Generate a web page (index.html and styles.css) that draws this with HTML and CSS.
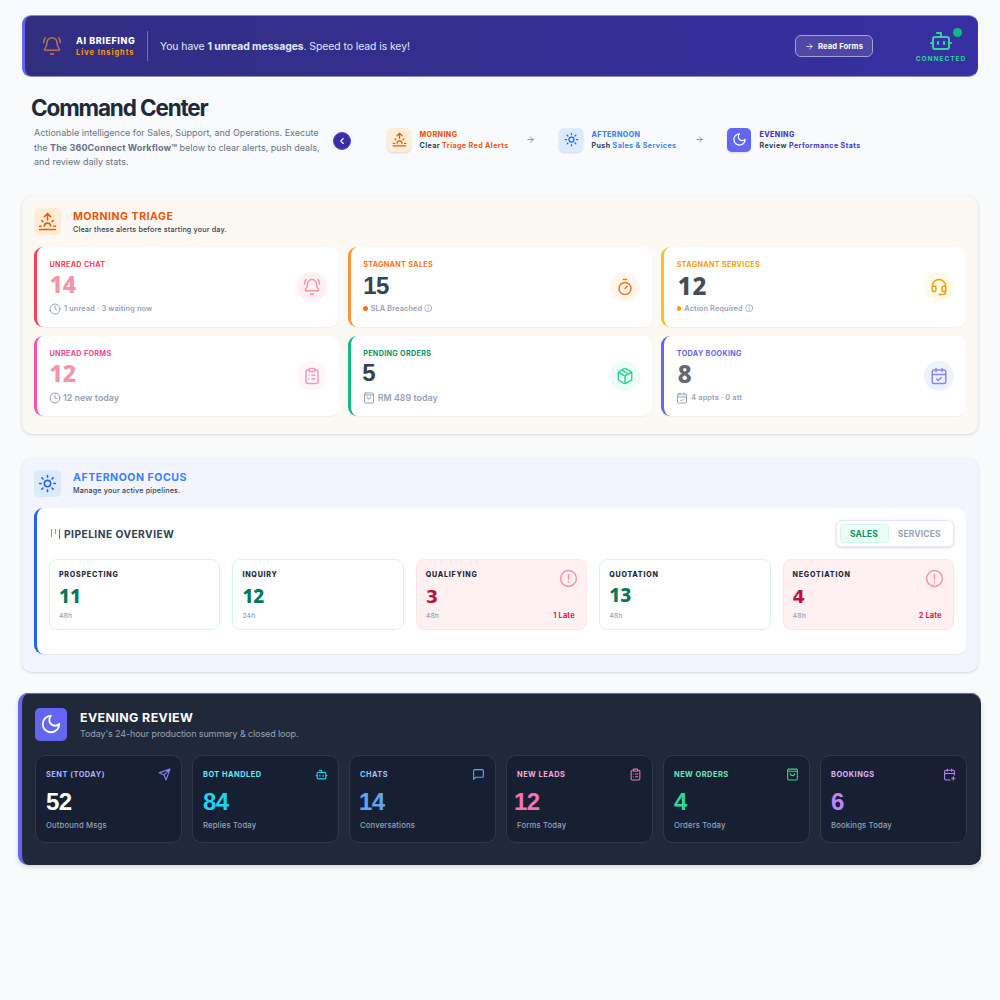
FILE: index.html
```
<!DOCTYPE html>
<html lang="en">
  <head>
    <meta charset="utf-8">
    <title>Command Center</title>
    <link rel="stylesheet" href="styles.css">
  </head>
  <body>

    <svg class="sprite" xmlns="http://www.w3.org/2000/svg">
      <symbol id="bell" viewBox="0 0 24 24"><path d="M10.27 21a2 2 0 0 0 3.46 0M22 8c0-2.3-.8-4.3-2-6M3.26 15.33A1 1 0 0 0 4 17h16a1 1 0 0 0 .74-1.67C19.41 13.96 18 12.5 18 8A6 6 0 0 0 6 8c0 4.5-1.41 5.96-2.74 7.33M4 2C2.8 3.7 2 5.7 2 8" /></symbol>
      <symbol id="arrow" viewBox="0 0 24 24"><path d="M5 12h14M12 5l7 7-7 7" /></symbol>
      <symbol id="chevron" viewBox="0 0 24 24"><path d="M15 18l-6-6 6-6" /></symbol>
      <symbol id="bot" viewBox="0 0 24 24"><path d="M12 8V4H8M2 14h2M20 14h2M15 13v2M9 13v2" /><rect x="4" y="8" width="16" height="12" rx="2" /></symbol>
      <symbol id="sunrise" viewBox="0 0 24 24"><path d="M12 2v8M4.93 10.93l1.41 1.41M2 18h2M20 18h2M19.07 10.93l-1.41 1.41M22 22H2M8 6l4-4 4 4M16 18a4 4 0 0 0-8 0" /></symbol>
      <symbol id="sun" viewBox="0 0 24 24"><circle cx="12" cy="12" r="4" /><path d="M12 2v2M12 20v2M4.93 4.93l1.41 1.41M17.66 17.66l1.41 1.41M2 12h2M20 12h2M6.34 17.66l-1.41 1.41M19.07 4.93l-1.41 1.41" /></symbol>
      <symbol id="moon" viewBox="0 0 24 24"><path d="M12 3a6 6 0 0 0 9 9 9 9 0 1 1-9-9Z" /></symbol>
      <symbol id="clock" viewBox="0 0 24 24"><circle cx="12" cy="12" r="10" /><path d="M12 6v6l4 2" /></symbol>
      <symbol id="timer" viewBox="0 0 24 24"><path d="M10 2h4M12 14l3-3" /><circle cx="12" cy="14" r="8" /></symbol>
      <symbol id="headset" viewBox="0 0 24 24"><path d="M3 11h3a2 2 0 0 1 2 2v3a2 2 0 0 1-2 2H5a2 2 0 0 1-2-2v-5Zm0 0a9 9 0 1 1 18 0m0 0v5a2 2 0 0 1-2 2h-1a2 2 0 0 1-2-2v-3a2 2 0 0 1 2-2h3ZM21 16v2a4 4 0 0 1-4 4h-5" /></symbol>
      <symbol id="clipboard" viewBox="0 0 24 24"><rect x="8" y="2" width="8" height="4" rx="1" /><path d="M16 4h2a2 2 0 0 1 2 2v14a2 2 0 0 1-2 2H6a2 2 0 0 1-2-2V6a2 2 0 0 1 2-2h2M12 11h4M12 16h4M8 11h.01M8 16h.01" /></symbol>
      <symbol id="package" viewBox="0 0 24 24"><path d="M11 21.73a2 2 0 0 0 2 0l7-4A2 2 0 0 0 21 16V8a2 2 0 0 0-1-1.73l-7-4a2 2 0 0 0-2 0l-7 4A2 2 0 0 0 3 8v8a2 2 0 0 0 1 1.73zM12 22V12M3.3 7L12 12l8.7-5M7.5 4.27l9 5.15" /></symbol>
      <symbol id="calendar" viewBox="0 0 24 24"><path d="M8 2v4M16 2v4M3 10h18M9 16l2 2 4-4" /><rect x="3" y="4" width="18" height="18" rx="2" /></symbol>
      <symbol id="calendar-plus" viewBox="0 0 24 24"><path d="M8 2v4M16 2v4M3 10h18M21 13V6a2 2 0 0 0-2-2H5a2 2 0 0 0-2 2v14a2 2 0 0 0 2 2h8M16 19h6M19 16v6" /></symbol>
      <symbol id="bag" viewBox="0 0 24 24"><rect x="3" y="2" width="18" height="20" rx="2" /><path d="M3 6h18M16 10a4 4 0 0 1-8 0" /></symbol>
      <symbol id="info" viewBox="0 0 24 24"><circle cx="12" cy="12" r="10" /><path d="M12 6v.5M12 10v8" /></symbol>
      <symbol id="alert" viewBox="0 0 24 24"><circle cx="12" cy="12" r="10" /><path d="M12 7v6M12 16.5v.5" /></symbol>
      <symbol id="send" viewBox="0 0 24 24"><path d="M22 2l-7 20-4-9-9-4ZM22 2L11 13" /></symbol>
      <symbol id="message" viewBox="0 0 24 24"><path d="M21 15a2 2 0 0 1-2 2H7l-4 4V5a2 2 0 0 1 2-2h14a2 2 0 0 1 2 2z" /></symbol>
    </svg>

    <header class="briefing">
      <svg class="icon briefing-bell"><use href="#bell" /></svg>
      <div class="briefing-title">
        <strong>AI BRIEFING</strong>
        <span>Live Insights</span>
      </div>
      <p class="briefing-text">You have <b>1 unread messages</b>. Speed to lead is key!</p>
      <button class="read-forms"><svg class="icon"><use href="#arrow" /></svg>Read Forms</button>
      <div class="status">
        <svg class="icon"><use href="#bot" /></svg>
        <span class="status-dot"></span>
        <span class="status-text">CONNECTED</span>
      </div>
    </header>

    <section class="intro">
      <div class="intro-text">
        <h1>Command Center</h1>
        <p>Actionable intelligence for Sales, Support, and Operations. Execute<br>the <b>The 360Connect Workflow™</b> below to clear alerts, push deals,<br>and review daily stats.</p>
      </div>
      <button class="collapse"><svg class="icon"><use href="#chevron" /></svg></button>
      <div class="steps">
        <div class="step step-morning">
          <span class="tile"><svg class="icon"><use href="#sunrise" /></svg></span>
          <div><strong>MORNING</strong><p>Clear <em>Triage Red Alerts</em></p></div>
        </div>
        <svg class="icon step-arrow"><use href="#arrow" /></svg>
        <div class="step step-afternoon">
          <span class="tile"><svg class="icon"><use href="#sun" /></svg></span>
          <div><strong>AFTERNOON</strong><p>Push <em>Sales &amp; Services</em></p></div>
        </div>
        <svg class="icon step-arrow"><use href="#arrow" /></svg>
        <div class="step step-evening">
          <span class="tile"><svg class="icon"><use href="#moon" /></svg></span>
          <div><strong>EVENING</strong><p>Review <em>Performance Stats</em></p></div>
        </div>
      </div>
    </section>

    <section class="panel morning">
      <div class="panel-head">
        <span class="tile"><svg class="icon"><use href="#sunrise" /></svg></span>
        <div><h2>MORNING TRIAGE</h2><p>Clear these alerts before starting your day.</p></div>
      </div>
      <div class="alerts">
        <article class="alert chat">
          <div>
            <h3>UNREAD CHAT</h3>
            <div class="count">14</div>
            <p><svg class="icon"><use href="#clock" /></svg>1 unread · 3 waiting now</p>
          </div>
          <span class="badge"><svg class="icon"><use href="#bell" /></svg></span>
        </article>
        <article class="alert sales">
          <div>
            <h3>STAGNANT SALES</h3>
            <div class="count">15</div>
            <p><i class="dot"></i>SLA Breached <svg class="icon info"><use href="#info" /></svg></p>
          </div>
          <span class="badge"><svg class="icon"><use href="#timer" /></svg></span>
        </article>
        <article class="alert services">
          <div>
            <h3>STAGNANT SERVICES</h3>
            <div class="count">12</div>
            <p><i class="dot"></i>Action Required <svg class="icon info"><use href="#info" /></svg></p>
          </div>
          <span class="badge"><svg class="icon"><use href="#headset" /></svg></span>
        </article>
        <article class="alert forms">
          <div>
            <h3>UNREAD FORMS</h3>
            <div class="count">12</div>
            <p><svg class="icon"><use href="#clock" /></svg>12 new today</p>
          </div>
          <span class="badge"><svg class="icon"><use href="#clipboard" /></svg></span>
        </article>
        <article class="alert orders">
          <div>
            <h3>PENDING ORDERS</h3>
            <div class="count">5</div>
            <p><svg class="icon"><use href="#bag" /></svg>RM 489 today</p>
          </div>
          <span class="badge"><svg class="icon"><use href="#package" /></svg></span>
        </article>
        <article class="alert booking">
          <div>
            <h3>TODAY BOOKING</h3>
            <div class="count">8</div>
            <p><svg class="icon"><use href="#calendar" /></svg>4 appts · 0 att</p>
          </div>
          <span class="badge"><svg class="icon"><use href="#calendar" /></svg></span>
        </article>
      </div>
    </section>

    <section class="panel afternoon">
      <div class="panel-head">
        <span class="tile"><svg class="icon"><use href="#sun" /></svg></span>
        <div><h2>AFTERNOON FOCUS</h2><p>Manage your active pipelines.</p></div>
      </div>
      <div class="pipeline">
        <div class="pipeline-head">
          <span class="bars"><i></i><i></i><i></i></span>
          <h3>PIPELINE OVERVIEW</h3>
          <div class="toggle"><button class="active">SALES</button><button>SERVICES</button></div>
        </div>
        <div class="stages">
          <article class="stage">
            <h4>PROSPECTING</h4>
            <div class="count">11</div>
            <footer>48h</footer>
          </article>
          <article class="stage">
            <h4>INQUIRY</h4>
            <div class="count">12</div>
            <footer>24h</footer>
          </article>
          <article class="stage late">
            <h4>QUALIFYING</h4>
            <div class="count">3</div>
            <footer>48h <b>1 Late</b></footer>
            <svg class="icon"><use href="#alert" /></svg>
          </article>
          <article class="stage quotation">
            <h4>QUOTATION</h4>
            <div class="count">13</div>
            <footer>48h</footer>
          </article>
          <article class="stage late">
            <h4>NEGOTIATION</h4>
            <div class="count">4</div>
            <footer>48h <b>2 Late</b></footer>
            <svg class="icon"><use href="#alert" /></svg>
          </article>
        </div>
      </div>
    </section>

    <section class="evening">
      <div class="panel-head">
        <span class="tile"><svg class="icon"><use href="#moon" /></svg></span>
        <div><h2>EVENING REVIEW</h2><p>Today's 24-hour production summary &amp; closed loop.</p></div>
      </div>
      <div class="stats">
        <article class="stat sent">
          <h3>SENT (TODAY)<svg class="icon"><use href="#send" /></svg></h3>
          <div class="count">52</div>
          <p>Outbound Msgs</p>
        </article>
        <article class="stat handled">
          <h3>BOT HANDLED<svg class="icon"><use href="#bot" /></svg></h3>
          <div class="count">84</div>
          <p>Replies Today</p>
        </article>
        <article class="stat chats">
          <h3>CHATS<svg class="icon"><use href="#message" /></svg></h3>
          <div class="count">14</div>
          <p>Conversations</p>
        </article>
        <article class="stat leads">
          <h3>NEW LEADS<svg class="icon"><use href="#clipboard" /></svg></h3>
          <div class="count">12</div>
          <p>Forms Today</p>
        </article>
        <article class="stat new-orders">
          <h3>NEW ORDERS<svg class="icon"><use href="#bag" /></svg></h3>
          <div class="count">4</div>
          <p>Orders Today</p>
        </article>
        <article class="stat bookings">
          <h3>BOOKINGS<svg class="icon"><use href="#calendar-plus" /></svg></h3>
          <div class="count">6</div>
          <p>Bookings Today</p>
        </article>
      </div>
    </section>

  </body>
</html>
```
FILE: styles.css
```
* {
  box-sizing: border-box;
}
html, body {
  height: 100%;
}
body {
  --slate: #1e293b;
  --muted: #64748b;
  --soft: #94a3b8;
  --indigo: #6366f1;

  margin: 0;
  padding: 15px 22px 0;
  background: #f9fafc;
  color: var(--slate);
  font-family: Inter, "Liberation Sans", sans-serif;
  overflow: hidden;
}
h1, h2, h3, h4, p {
  margin: 0;
}
button {
  font-family: inherit;
  padding: 0;
  border: 0;
}
em {
  font-style: normal;
}
.sprite {
  display: none;
}
.icon {
  flex: none;
  fill: none;
  stroke: currentColor;
  stroke-width: 2;
  stroke-linecap: round;
  stroke-linejoin: round;
}

/* top bar */
.briefing {
  display: flex;
  align-items: center;
  height: 62px;
  padding: 0 11px 0 17px;
  border: 1px solid #8f8cc4;
  border-left: 3px solid var(--indigo);
  border-right-color: #3f38a8;
  border-radius: 9px;
  background: linear-gradient(to right, #312e81, #3730a3);
  color: #fff;
}
.briefing-bell {
  width: 20px;
  height: 20px;
  color: #b5714f;
  stroke-width: 1.8;
}
.briefing-title {
  display: flex;
  flex-direction: column;
  width: 72px;
  height: 30px;
  margin-left: 14px;
  padding-top: 4px;
  border-right: 1px solid #6d6cd8;
  line-height: 11.5px;
}
.briefing-title strong {
  font-size: 9px;
  font-weight: 800;
  letter-spacing: 0.57px;
  white-space: nowrap;
}
.briefing-title span {
  font-size: 7.4px;
  font-weight: 700;
  letter-spacing: 1px;
  color: #f59e0b;
  white-space: nowrap;
}
.briefing-text {
  flex: 1;
  margin-left: 12px;
  font-size: 10.4px;
  letter-spacing: -0.06px;
  color: #e0e7ff;
}
.read-forms {
  display: flex;
  align-items: center;
  justify-content: center;
  gap: 4px;
  width: 78px;
  height: 22px;
  border: 1px solid #a5a0d4;
  border-radius: 6px;
  background: #5046a5;
  color: #fff;
  font-size: 7.6px;
  font-weight: 700;
  letter-spacing: 0.15px;
}
.read-forms .icon {
  width: 9px;
  height: 9px;
}
.status {
  position: relative;
  display: flex;
  flex-direction: column;
  align-items: center;
  width: 50px;
  margin-left: 43px;
  color: #34d399;
}
.status .icon {
  width: 24px;
  height: 24px;
}
.status-dot {
  position: absolute;
  top: -1px;
  right: 4px;
  width: 9px;
  height: 9px;
  border-radius: 50%;
  background: #10b981;
}
.status-text {
  margin-top: 2.5px;
  font-size: 6.5px;
  line-height: 8px;
  font-weight: 700;
  letter-spacing: 1px;
}

/* page title and workflow */
.intro {
  display: flex;
  height: 119px;
  padding: 16px 0 0 9px;
}
.intro-text {
  width: 302px;
}
.intro h1 {
  font-size: 22.5px;
  line-height: 30px;
  font-weight: 700;
  letter-spacing: -1.15px;
}
.intro-text p {
  margin: 3px 0 0 3px;
  font-size: 9px;
  line-height: 14.5px;
  color: var(--muted);
  white-space: nowrap;
}
.intro-text b {
  letter-spacing: 0.1px;
}
.collapse {
  display: flex;
  align-items: center;
  justify-content: center;
  width: 18px;
  height: 18px;
  margin-top: 39px;
  border: 1px solid #4f46e5;
  border-radius: 50%;
  background: #3730a3;
  color: #fff;
}
.collapse .icon {
  width: 10px;
  height: 10px;
  stroke-width: 2.6;
}
.steps {
  display: flex;
  align-items: center;
  height: 24px;
  margin: 34.5px 0 0 36px;
}
.step {
  display: flex;
  align-items: center;
  gap: 8.5px;
  font-size: 7.1px;
  line-height: 11px;
  white-space: nowrap;
}
.step strong {
  display: block;
  font-weight: 800;
  letter-spacing: 0.4px;
}
.step p {
  font-weight: 700;
  letter-spacing: 0.4px;
  color: #334155;
}
.step em, .step strong {
  color: var(--accent);
}
.step-morning {
  --accent: #ea580c;
  width: 139px;
}
.step-afternoon {
  --accent: #3b82f6;
  width: 135.5px;
}
.step-evening {
  --accent: #4338ca;
}
.step-arrow {
  width: 9px;
  height: 9px;
  margin-right: 24px;
  color: var(--muted);
}
.step-afternoon + .step-arrow {
  margin-right: 23.5px;
}
.tile {
  display: flex;
  flex: none;
  align-items: center;
  justify-content: center;
  width: 24px;
  height: 24px;
  border-radius: 5px;
  box-shadow: 0 1px 2px rgba(15, 23, 42, 0.15);
}
.tile .icon {
  width: 15px;
  height: 15px;
}
.step-morning .tile, .morning .tile {
  background: #ffedd5;
  color: #ea580c;
}
.step-afternoon .tile, .afternoon .tile {
  background: #dbeafe;
  color: #2563eb;
}
.step-evening .tile, .evening .tile {
  background: var(--indigo);
  color: #fff;
}

/* sections */
.panel {
  padding: 12px;
  border-radius: 10px;
  box-shadow: 0 1px 3px rgba(15, 23, 42, 0.16);
}
.panel-head {
  display: flex;
}
.panel-head .tile {
  width: 27px;
  height: 27px;
  box-shadow: none;
}
.panel-head .icon {
  width: 19px;
  height: 19px;
}
.panel-head > div {
  margin-left: 12px;
  padding-top: 0.5px;
}
.panel-head h2 {
  font-size: 10.6px;
  line-height: 16px;
  letter-spacing: 0.5px;
}
.panel-head p {
  font-size: 7.2px;
  line-height: 10px;
  font-weight: 500;
  letter-spacing: 0.16px;
  color: #334155;
}
.morning {
  height: 238px;
  background: #fcf8f3;
}
.morning h2 {
  color: #ea580c;
}
.alerts {
  display: grid;
  grid-template-columns: repeat(3, 1fr);
  gap: 9px;
  margin-top: 12px;
}
.alert {
  display: flex;
  align-items: center;
  justify-content: space-between;
  height: 80px;
  padding: 0 12px 0 12.5px;
  border-left: 3px solid var(--edge);
  border-radius: 9px;
  background: #fff;
  box-shadow: 0 1px 1px rgba(15, 23, 42, 0.04);
}
.alert > div {
  padding-top: 1px;
}
.alert h3 {
  font-size: 7.2px;
  line-height: 10px;
  letter-spacing: 0.33px;
  color: var(--label);
}
.count {
  font-family: "Noto Sans", sans-serif;
  font-weight: 800;
}
.alert .count {
  height: 22px;
  margin: 3px 0 7px;
  font-size: 23px;
  line-height: 22px;
  color: var(--number);
}
.alert p {
  display: flex;
  align-items: center;
  height: 13px;
  gap: 3px;
  font-size: 7.3px;
  font-weight: 600;
  letter-spacing: 0.15px;
  color: var(--soft);
}
.alert p .icon {
  width: 12px;
  height: 12px;
  margin-left: -0.5px;
}
.alert p .info {
  width: 8.5px;
  height: 8.5px;
  margin-left: -1px;
}
.dot {
  width: 4.5px;
  height: 4.5px;
  border-radius: 50%;
  background: var(--label);
}
.badge {
  display: flex;
  align-items: center;
  justify-content: center;
  width: 30px;
  height: 30px;
  border-radius: 50%;
  background: var(--badge);
  color: var(--icon);
}
.badge .icon {
  width: 18px;
  height: 18px;
}
.chat {
  --edge: #f43f5e;
  --label: #f43f5e;
  --number: #f395a8;
  --badge: #fff1f2;
  --icon: #f593a6;
}
.sales {
  --edge: #fb923c;
  --label: #f97316;
  --number: #374151;
  --badge: #fff7ed;
  --icon: #f97316;
}
.services {
  --edge: #fbbf24;
  --label: #f59e0b;
  --number: #454c57;
  --badge: #fffbeb;
  --icon: #f59e0b;
}
.forms {
  --edge: #f751ae;
  --label: #ec4899;
  --number: #f395a8;
  --badge: #fff6f8;
  --icon: #f19ac8;
}
.orders {
  --edge: #10b981;
  --label: #059669;
  --number: #374151;
  --badge: #ecfdf5;
  --icon: #34d399;
}
.booking {
  --edge: #6366f1;
  --label: #6366f1;
  --number: #646873;
  --badge: #eef2ff;
  --icon: #818cf8;
}
.forms p, .orders p {
  font-size: 8.8px;
  letter-spacing: 0.05px;
}
.alert.forms p {
  gap: 2px;
}
.sales .count, .orders .count {
  font-family: "Liberation Sans", sans-serif;
  font-size: 24px;
  letter-spacing: -0.5px;
}
.alert.sales .count {
  line-height: 25px;
}
.orders .count {
  text-indent: -1px;
}
.alert.services .count {
  font-size: 24px;
  line-height: 25px;
  letter-spacing: 0.8px;
  text-indent: 1px;
}
.alert.booking .count {
  font-size: 24px;
  line-height: 23px;
  text-indent: 1px;
}

/* pipeline */
.afternoon {
  height: 214px;
  margin-top: 24px;
  padding-top: 11.5px;
  background: #f3f5fe;
}
.afternoon h2 {
  color: #3b82f6;
}
.pipeline {
  height: 146px;
  margin-top: 11.5px;
  padding: 12px 12px 0;
  border-left: 3px solid #2563eb;
  border-radius: 9px;
  background: #fff;
  box-shadow: 0 1px 1px rgba(15, 23, 42, 0.06);
}
.pipeline-head {
  display: flex;
  align-items: center;
  height: 27px;
}
.pipeline-head h3 {
  flex: 1;
  margin-left: 4.5px;
  font-size: 10.2px;
  font-weight: 700;
  letter-spacing: 0.47px;
  color: #334155;
}
.bars {
  display: flex;
  gap: 3px;
  height: 10px;
  margin-left: 1.5px;
}
.bars i {
  width: 1px;
  height: 8px;
  background: #8b8bf5;
}
.bars i:nth-child(2) {
  height: 5px;
}
.bars i:nth-child(3) {
  height: 10px;
  background: var(--indigo);
}
.toggle {
  display: flex;
  height: 27px;
  padding: 3px;
  border: 1px solid #e0e7ff;
  border-radius: 6px;
  box-shadow: 0 1px 3px rgba(15, 23, 42, 0.17);
}
.toggle button {
  width: 61.5px;
  background: none;
  color: var(--soft);
  font-size: 8.5px;
  font-weight: 700;
  letter-spacing: 0.15px;
}
.toggle .active {
  width: 49px;
  border: 1px solid #d1fae5;
  border-radius: 4px;
  background: #ecfdf5;
  color: #059669;
}
.stages {
  display: grid;
  grid-template-columns: repeat(5, 1fr);
  gap: 12px;
  margin-top: 12px;
}
.stage {
  position: relative;
  height: 71px;
  padding: 10px 11.5px 0 9px;
  border: 1px solid #d1fae5;
  border-radius: 8px;
}
.stage h4 {
  font-size: 7.1px;
  line-height: 10px;
  font-weight: 800;
  letter-spacing: 0.75px;
}
.stage .count {
  height: 22px;
  margin-top: 5px;
  font-size: 19px;
  line-height: 22px;
  color: #047857;
}
.stage footer {
  display: flex;
  justify-content: space-between;
  margin-top: 3.5px;
  font-size: 6.8px;
  line-height: 10px;
  font-weight: 500;
  letter-spacing: 0.15px;
  color: var(--soft);
}
.stage.quotation .count {
  line-height: 20px;
}
.late {
  border-color: #ffe4e6;
  background: #fff1f2;
}
.stage.late .count {
  font-family: "DejaVu Sans", sans-serif;
  font-size: 18px;
  line-height: 24px;
  font-weight: 700;
  color: #be123c;
}
.late b {
  font-size: 7.4px;
  color: #e11d48;
}
.stage .icon {
  position: absolute;
  top: 8.5px;
  right: 8.5px;
  width: 19px;
  height: 19px;
  stroke-width: 1.8;
  color: #fb8fa0;
}

/* evening */
.evening {
  height: 172px;
  margin: 21px -2.5px 0 -4px;
  padding: 14.5px 14px 0 13px;
  border-left: 4px solid var(--indigo);
  border-radius: 10px;
  background: #20293a;
  box-shadow: 0 2px 5px rgba(15, 23, 42, 0.16), inset 0 1px #6b7380;
}
.evening .tile {
  width: 31.5px;
  height: 33px;
}
.evening .panel-head .icon {
  width: 22px;
  height: 22px;
}
.evening .panel-head > div {
  margin-left: 13.5px;
}
.evening h2 {
  font-size: 12.4px;
  line-height: 19px;
  letter-spacing: 0.4px;
  color: #fff;
}
.evening .panel-head p {
  font-size: 9px;
  line-height: 13px;
  font-weight: 400;
  letter-spacing: -0.11px;
  color: var(--soft);
}
.stats {
  display: grid;
  grid-template-columns: repeat(6, 1fr);
  gap: 10.5px;
  margin-top: 14.5px;
}
.stat {
  height: 87.5px;
  padding: 11px 10px 0;
  border: 1px solid #2d394a;
  border-radius: 10px;
  background: #172033;
}
.stat h3 {
  display: flex;
  align-items: center;
  justify-content: space-between;
  height: 14px;
  font-size: 7.4px;
  letter-spacing: 0.5px;
  color: var(--label);
}
.stat .icon {
  width: 13px;
  height: 13px;
  color: var(--number);
}
.stat .count {
  margin-top: 8px;
  font-family: "Liberation Sans", sans-serif;
  font-weight: 700;
  font-size: 24px;
  line-height: 26px;
  letter-spacing: -0.6px;
  color: var(--number);
}
.stat p {
  margin-top: 5.5px;
  font-size: 7.7px;
  line-height: 10px;
  font-weight: 500;
  letter-spacing: 0.16px;
  color: var(--soft);
}
.sent {
  --label: #a5b4fc;
  --number: #fff;
}
.sent .icon {
  color: #818cf8;
}
.handled {
  --label: #67e8f9;
  --number: #22d3ee;
}
.chats {
  --label: #93c5fd;
  --number: #60a5fa;
}
.leads {
  --label: #f9a8d4;
  --number: #f472b6;
}
.leads .count {
  text-indent: -3px;
}
.chats .count {
  text-indent: -1px;
}
.new-orders {
  --label: #6ee7b7;
  --number: #34d399;
}
.bookings {
  --label: #d8b4fe;
  --number: #c084fc;
}
```
